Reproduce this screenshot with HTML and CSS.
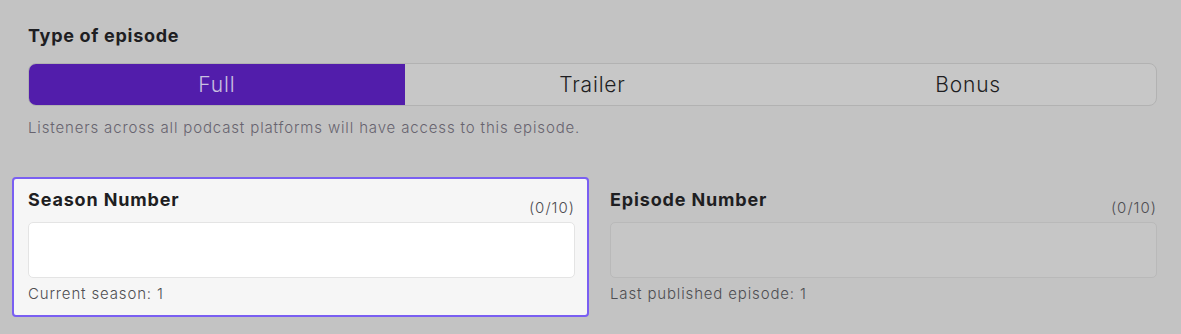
FILE: index.html
```html
<!DOCTYPE html>
<html lang="en">

<head>
    <meta charset="UTF-8">
    <meta name="viewport" content="width=device-width, initial-scale=1.0">
    <title>Episode details</title>
    <link rel="stylesheet" href="styles.css">
</head>

<body>
    <div class="page">
        <h3 class="section-title">Type of episode</h3>

        <!-- Loại tập -->
        <div class="segmented">
            <button class="segment active">Full</button>
            <button class="segment">Trailer</button>
            <button class="segment">Bonus</button>
        </div>
        <p class="help">Listeners across all podcast platforms will have access to this episode.</p>

        <div class="fields">
            <div class="field focused">
                <div class="field-head">
                    <label class="field-label">Season Number</label>
                    <span class="counter">(0/10)</span>
                </div>
                <input class="field-input white" type="text">
                <p class="field-hint">Current season: 1</p>
            </div>

            <div class="field">
                <div class="field-head">
                    <label class="field-label">Episode Number</label>
                    <span class="counter">(0/10)</span>
                </div>
                <input class="field-input" type="text">
                <p class="field-hint">Last published episode: 1</p>
            </div>
        </div>
    </div>
</body>

</html>
```

FILE: styles.css
```css
body {
    font-family: 'Inter', 'Noto Sans', sans-serif;
    background-color: #c3c3c3;
    margin: 0;
    padding: 0;
    color: #1e1e22;
}

.page {
    padding: 25px 24px 0 28px;
}

.section-title {
    font-size: 18px;
    font-weight: 700;
    margin: 0 0 16px 0;
    line-height: 22px;
    letter-spacing: 0.7px;
}

.segmented {
    display: flex;
    height: 43px;
    border: 1px solid #b2b2b2;
    border-radius: 8px;
    background-color: #c7c7c7;
    overflow: hidden;
    box-sizing: border-box;
}

.segment {
    flex: 1;
    border: none;
    background: none;
    font-family: 'Inter', 'Noto Sans', sans-serif;
    font-size: 21px;
    font-weight: 300;
    letter-spacing: 0.8px;
    color: #1e1e22;
    padding: 0;
    cursor: pointer;
}

.segment.active {
    background-color: #521dab;
    color: #c9c0e0;
}

.help {
    font-size: 15px;
    font-weight: 300;
    color: #67636f;
    margin: 12px 0 0 0;
    line-height: 20px;
    letter-spacing: 0.85px;
}

.fields {
    display: grid;
    grid-template-columns: 1fr 1fr;
    column-gap: 35px;
    margin-top: 39px;
}

.field {
    padding: 12px 0;
}

.field.focused {
    margin: 0 -14px 0 -16px;
    padding: 10px 12px 11px 14px;
    border: 2px solid #7a5ff2;
    border-radius: 4px;
    background-color: #f6f6f6;
}

.field-head {
    display: flex;
    justify-content: space-between;
    align-items: flex-end;
    height: 22px;
}

.field-label {
    font-size: 18px;
    font-weight: 700;
    line-height: 22px;
    letter-spacing: 0.85px;
}

.counter {
    font-size: 15px;
    font-weight: 300;
    color: #4e4e52;
    line-height: 18px;
    letter-spacing: 1px;
    margin-bottom: -6px;
}

.field-input {
    display: block;
    width: 100%;
    box-sizing: border-box;
    height: 56px;
    margin-top: 11px;
    border: 1px solid #b9b9b9;
    border-radius: 5px;
    background-color: #c6c6c6;
}

.field-input.white {
    background-color: #ffffff;
    border-color: #e4e4e4;
}

.field-hint {
    font-size: 15px;
    font-weight: 300;
    color: #4e4e52;
    margin: 6px 0 0 0;
    line-height: 20px;
    letter-spacing: 0.85px;
}
```
